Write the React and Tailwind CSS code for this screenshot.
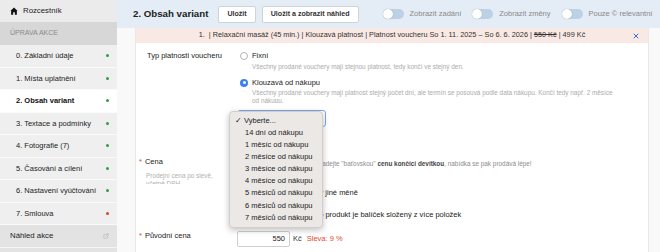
import React from 'react';
import { X, ExternalLink } from 'lucide-react';

const steps = [
    { label: '0. Základní údaje', dot: 'green' },
    { label: '1. Místa uplatnění', dot: 'green' },
    { label: '2. Obsah variant', dot: 'green', active: true },
    { label: '3. Textace a podmínky', dot: 'green' },
    { label: '4. Fotografie (7)', dot: 'green' },
    { label: '5. Časování a cílení', dot: 'green' },
    { label: '6. Nastavení vyúčtování', dot: 'green' },
    { label: '7. Smlouva', dot: 'red' },
];

const options = [
    '14 dní od nákupu',
    '1 měsíc od nákupu',
    '2 měsíce od nákupu',
    '3 měsíce od nákupu',
    '4 měsíce od nákupu',
    '5 měsíců od nákupu',
    '6 měsíců od nákupu',
    '7 měsíců od nákupu',
];

const Toggle = ({ label }) => (
    <div className="flex items-center gap-[6px] shrink-0">
        <div className="w-[21px] h-[10px] rounded-full bg-[#bcd0e6] relative">
            <div className="absolute left-0 top-0 w-[10px] h-[10px] rounded-full bg-white shadow-[0_0_1px_rgba(0,0,0,0.35)]"></div>
        </div>
        <span className="text-[7.5px] text-[#8a8a8a] whitespace-nowrap">{label}</span>
    </div>
);

const Sidebar = () => (
    <aside className="w-[117px] shrink-0 bg-[#efefef] flex flex-col">
        {/* Home */}
        <div className="h-[22px] flex items-center pl-[10px] gap-[5px] bg-[#ebebeb] text-[7.8px] text-[#222]">
            <svg width="8" height="8" viewBox="0 0 12 12">
                <path d="M0.5 6 L6 0.8 L11.5 6 L10.3 6 L10.3 11.5 L7.3 11.5 L7.3 8 L4.7 8 L4.7 11.5 L1.7 11.5 L1.7 6 Z" fill="#111" />
            </svg>
            <span>Rozcestník</span>
        </div>
        <div className="h-[23px] flex items-center pl-[10px] bg-[#d7d7d7] text-[7px] text-[#8a8a8a]">
            ÚPRAVA AKCE
        </div>

        {/* Steps */}
        {steps.map((s) => (
            <div
                key={s.label}
                className={`h-[22.5px] flex items-center justify-between pl-[16px] pr-[8px] border-b border-[#fafafa] text-[7.5px] ${s.active ? 'bg-white font-bold text-[#111]' : 'bg-[#efefef] text-[#222]'
                    }`}
            >
                <span className="whitespace-nowrap">{s.label}</span>
                <span className={`w-[3px] h-[3px] rounded-full ${s.dot === 'red' ? 'bg-[#d9402e]' : 'bg-[#2f9e3f]'}`}></span>
            </div>
        ))}

        <div className="h-[23px] flex items-center justify-between pl-[10px] pr-[8px] bg-[#e3e3e3] border-b border-[#f4f4f4] text-[7.8px] text-[#222]">
            <span>Náhled akce</span>
            <ExternalLink size={6} color="#aaa" strokeWidth={2} />
        </div>
        <div className="flex-1 bg-[#e3e3e3]"></div>
    </aside>
);

const App = () => {
    return (
        <div className="flex w-[660px] h-[252px] overflow-hidden bg-[#f9f9f9] font-['Liberation_Sans',Arial,sans-serif]">
            <Sidebar />

            <div className="flex-1 flex flex-col min-w-0">
                {/* Header */}
                <header className="h-[28px] shrink-0 bg-[#e4ecf5] flex items-center pl-[16px] overflow-hidden">
                    <h1 className="text-[9.7px] font-bold text-[#222] whitespace-nowrap">2. Obsah variant</h1>
                    <button className="ml-[10px] h-[17px] px-[8px] bg-white border border-[#cfd4da] rounded-[2px] text-[7.1px] font-bold text-[#333] whitespace-nowrap">
                        Uložit
                    </button>
                    <button className="ml-[6px] h-[17px] px-[8px] bg-white border border-[#cfd4da] rounded-[2px] text-[7.1px] font-bold text-[#333] whitespace-nowrap">
                        Uložit a zobrazit náhled
                    </button>
                    <div className="ml-[24px] flex items-center gap-[11px]">
                        <Toggle label="Zobrazit zadání" />
                        <Toggle label="Zobrazit změny" />
                        <Toggle label="Pouze © relevantní" />
                    </div>
                </header>

                {/* Content */}
                <div className="flex-1 flex pl-[18px] pr-[11px] min-h-0">
                    <div className="flex-1 bg-white border-x border-[#e9e9e9] relative">
                        {/* Banner */}
                        <div className="h-[15px] bg-[#f9e9e4] flex items-center justify-center relative text-[7.3px] text-[#333] whitespace-nowrap">
                            <span>
                                1. &nbsp;| Relaxační masáž (45 min.) | Klouzavá platnost | Platnost voucheru So 1. 11. 2025 – So 6. 6. 2026 | <span className="line-through">550 Kč</span> | 499 Kč
                            </span>
                            <X size={8} color="#3a6fce" strokeWidth={3} className="absolute right-[8px] top-[3.5px]" />
                        </div>

                        {/* Form */}
                        <div className="pt-[8px]">
                            {/* Typ platnosti */}
                            <div className="flex">
                                <div className="w-[101px] shrink-0 pl-[11px] text-[7.5px] leading-[10px] text-[#222]">
                                    Typ platnosti voucheru
                                </div>
                                <div className="flex-1 min-w-0">
                                    <div className="h-[10px] flex items-center pl-[3px] gap-[4px]">
                                        <span className="w-[8px] h-[8px] rounded-full border border-[#b3b3b3] bg-white"></span>
                                        <span className="text-[7.5px] text-[#222]">Fixní</span>
                                    </div>
                                    <p className="mt-[2px] pl-[15px] text-[6.4px] leading-[8.5px] text-[#ababab]">
                                        Všechny prodané vouchery mají stejnou platnost, tedy končí ve stejný den.
                                    </p>
                                    <div className="mt-[6px] h-[10px] flex items-center pl-[3px] gap-[4px]">
                                        <span className="w-[8px] h-[8px] rounded-full bg-[#3a82f0] flex items-center justify-center">
                                            <span className="w-[3px] h-[3px] rounded-full bg-white"></span>
                                        </span>
                                        <span className="text-[7.5px] text-[#222]">Klouzavá od nákupu</span>
                                    </div>
                                    <div className="mt-[1px] h-[14px] overflow-hidden">
                                        <p className="pl-[15px] w-[382px] text-[6.4px] leading-[8.5px] text-[#ababab]">
                                            Všechny prodané vouchery mají platnost stejný počet dní, ale termín se posouvá podle data nákupu. Končí tedy např. 2 měsíce od nákupu.
                                        </p>
                                    </div>

                                    {/* Select with open menu */}
                                    <div className="mt-[7px] relative w-[89px] h-[17px] border border-[#7aa7ec] rounded-[3px] bg-white flex items-center justify-end pr-[2px]">
                                        <span className="text-[6px] text-[#555] leading-none">⌃</span>
                                        <div className="absolute left-[-9px] top-[0px] z-10 w-[94px] pt-[3px] pb-[4px] bg-[#ece8e6] border border-[#d3cecb] rounded-[4px] shadow-[0_2px_6px_rgba(0,0,0,0.25)] text-[7.5px] text-[#222]">
                                            <div className="h-[12.1px] flex items-center pl-[5px] whitespace-nowrap">
                                                <span className="w-[9px]">✓</span>
                                                <span>Vyberte...</span>
                                            </div>
                                            {options.map((o) => (
                                                <div key={o} className="h-[12.1px] flex items-center pl-[15px] whitespace-nowrap">
                                                    {o}
                                                </div>
                                            ))}
                                        </div>
                                    </div>
                                </div>
                            </div>

                            {/* Cena */}
                            <div className="flex mt-[29px]">
                                <div className="w-[101px] shrink-0 pl-[10px] pt-[1px]">
                                    <div className="text-[7.5px] leading-[10px] text-[#222]">
                                        <span className="text-[#e0462f] -ml-[7px] mr-[3px]">*</span>Cena
                                    </div>
                                    <div className="mt-[5px] h-[12px] overflow-hidden">
                                        <p className="text-[6.4px] leading-[8px] text-[#b0b0b0] w-[80px]">
                                            Prodejní cena po slevě, včetně DPH
                                        </p>
                                    </div>
                                </div>
                                <div className="flex-1 min-w-0">
                                    <div className="h-[16px] flex items-center">
                                        <div className="w-[53px] h-[16px] border border-[#cfcfcf] rounded-[2px]"></div>
                                        <span className="ml-[3px] text-[7.5px] text-[#333]">Kč</span>
                                        <span className="ml-[5px] text-[6.4px] text-[#8c8c8c] whitespace-nowrap">
                                            Tip: zadejte "baťovskou" <b className="text-[#444]">cenu končící devítkou</b>, nabídka se pak prodává lépe!
                                        </span>
                                    </div>
                                    <div className="mt-[16px] h-[10px] flex items-center pl-[3px] gap-[4px]">
                                        <span className="w-[8px] h-[8px] border border-[#a9a9a9] rounded-[2px]"></span>
                                        <span className="text-[7.5px] text-[#222] whitespace-nowrap">Nastavit cenu také i v jiné měně</span>
                                    </div>
                                    <div className="mt-[12px] h-[10px] flex items-center pl-[3px] gap-[4px]">
                                        <span className="w-[8px] h-[8px] border border-[#a9a9a9] rounded-[2px]"></span>
                                        <span className="text-[7.5px] text-[#222] whitespace-nowrap">Označte, pokud tento produkt je balíček složený z více položek</span>
                                    </div>
                                </div>
                            </div>

                            {/* Původní cena */}
                            <div className="flex mt-[11px]">
                                <div className="w-[101px] shrink-0 pl-[10px]">
                                    <div className="text-[7.5px] leading-[10px] text-[#222]">
                                        <span className="text-[#e0462f] -ml-[7px] mr-[3px]">*</span>Původní cena
                                    </div>
                                </div>
                                <div className="flex-1 min-w-0 h-[16px] flex items-center">
                                    <div className="w-[53px] h-[16px] border border-[#cfcfcf] rounded-[2px] flex items-center justify-end pr-[4px] text-[7.5px] text-[#222]">
                                        550
                                    </div>
                                    <span className="ml-[3px] text-[7.5px] text-[#333]">Kč</span>
                                    <span className="ml-[5px] text-[7.5px] text-[#e14b31]">Sleva: 9 %</span>
                                </div>
                            </div>
                        </div>
                    </div>
                </div>
            </div>
        </div>
    );
};

export default App;
